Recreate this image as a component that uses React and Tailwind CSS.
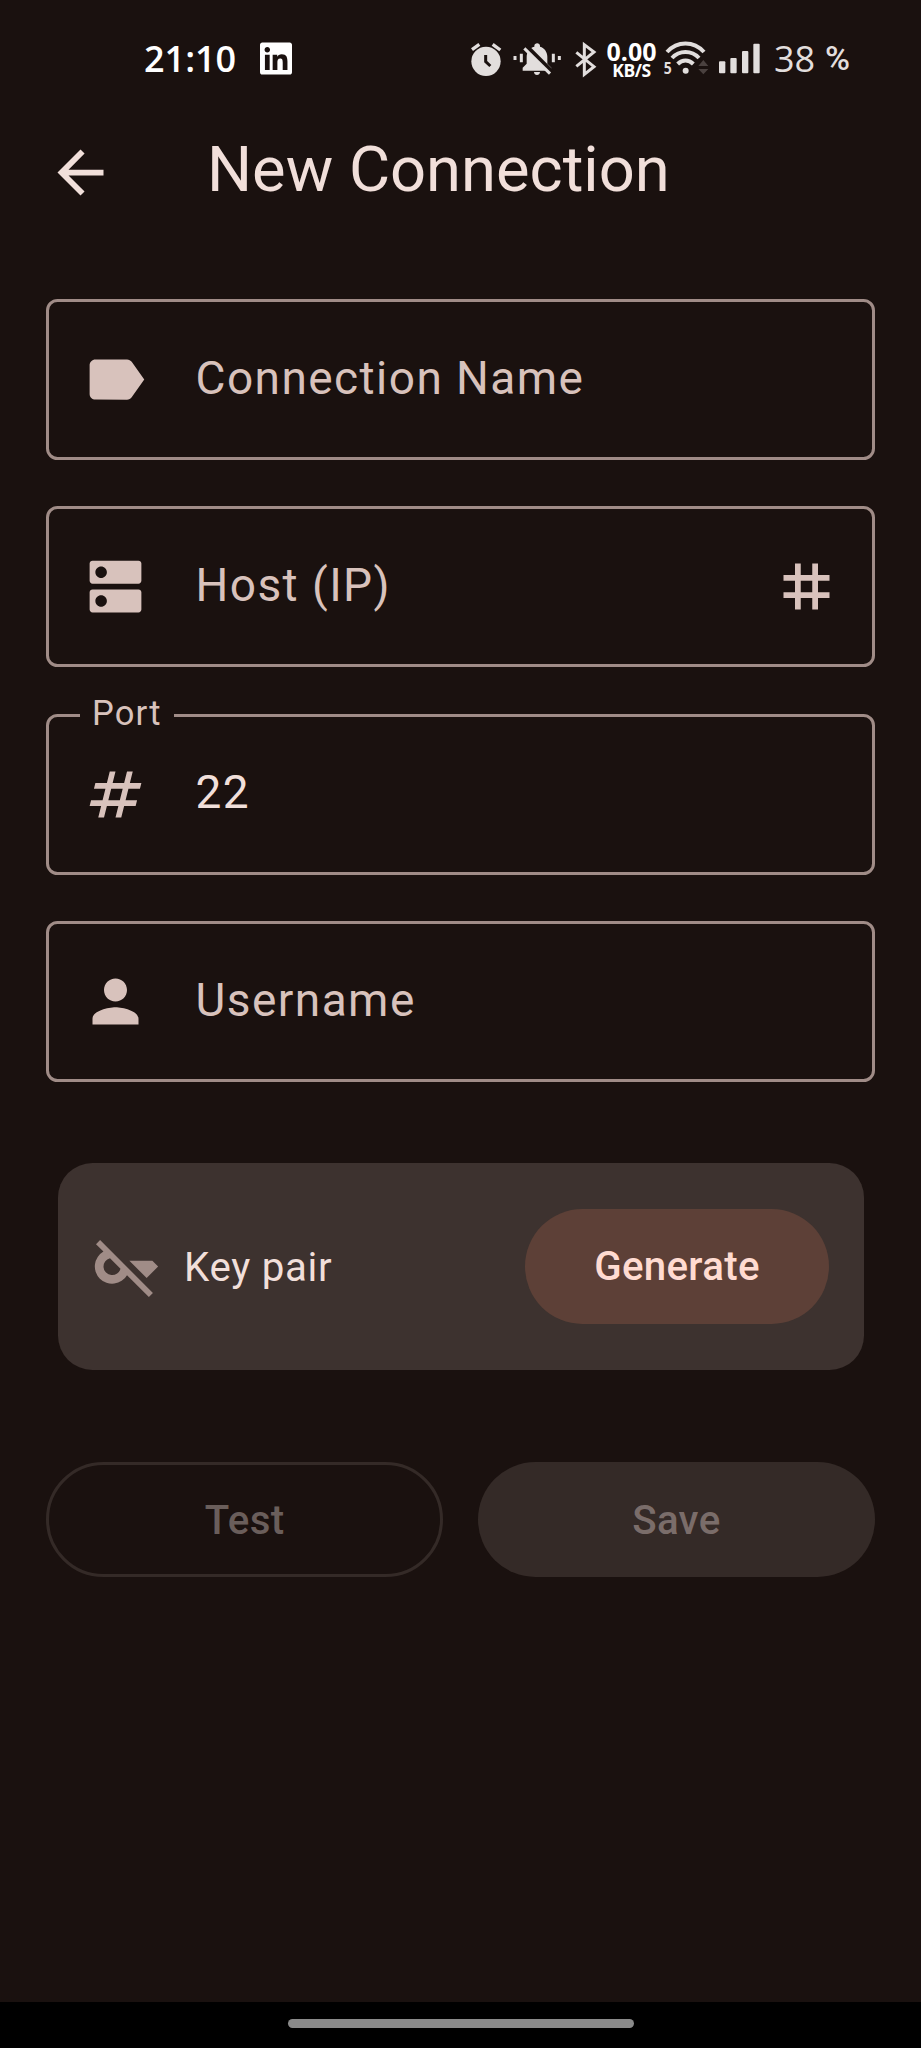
import React from "react";
import { FaLinkedin } from "react-icons/fa";

const icons = {
  back: "M20 11H7.83l5.59-5.59L12 4l-8 8 8 8 1.41-1.41L7.83 13H20v-2z",
  label:
    "M17.63 5.84C17.27 5.33 16.67 5 16 5L5 5.01C3.9 5.01 3 5.9 3 7v10c0 1.1.9 1.99 2 1.99L16 19c.67 0 1.27-.33 1.63-.84L22 12l-4.37-6.16z",
  dns: "M20 13H4c-.55 0-1 .45-1 1v6c0 .55.45 1 1 1h16c.55 0 1-.45 1-1v-6c0-.55-.45-1-1-1zM7 19c-1.1 0-2-.9-2-2s.9-2 2-2 2 .9 2 2-.9 2-2 2zM20 3H4c-.55 0-1 .45-1 1v6c0 .55.45 1 1 1h16c.55 0 1-.45 1-1V4c0-.55-.45-1-1-1zM7 9c-1.1 0-2-.9-2-2s.9-2 2-2 2 .9 2 2-.9 2-2 2z",
  grid: "M20 10V8h-4V4h-2v4h-4V4H8v4H4v2h4v4H4v2h4v4h2v-4h4v4h2v-4h4v-2h-4v-4h4zm-6 4h-4v-4h4v4z",
  tag: "M20.5 10L21 8h-4l1-4h-2l-1 4h-4l1-4h-2L9 8H5l-.5 2h4l-1 4h-4L3 16h4l-1 4h2l1-4h4l-1 4h2l1-4h4l.5-2h-4l1-4h4zm-7 4h-4l1-4h4l-1 4z",
  person:
    "M12 12c2.21 0 4-1.79 4-4s-1.79-4-4-4-4 1.79-4 4 1.79 4 4 4zm0 2c-2.67 0-8 1.34-8 4v2h16v-2c0-2.66-5.33-4-8-4z",
  keyOff:
    "M13 10h8l2 2-4 4-6-6zM2.81 2.81L1.39 4.22l2.59 2.59A6 6 0 1 0 12.18 15l7.6 7.61 1.41-1.41L2.81 2.81zM6.26 9.09l3.65 3.65A3 3 0 1 1 6.26 9.09z",
};

function Icon({ name, className = "" }) {
  return (
    <svg viewBox="0 0 24 24" className={`size-[69px] shrink-0 ${className}`} fill="currentColor" fillRule="evenodd">
      <path d={icons[name]} />
    </svg>
  );
}

function StatusBar() {
  return (
    <div className="h-[115px] pt-10 flex items-start font-['Open_Sans',sans-serif] text-[#e2dedd]">
      <div className="ml-[144px] w-[116px] h-10 text-[36px] leading-[38px] font-semibold text-white whitespace-nowrap">
        21:10
      </div>
      <FaLinkedin className="w-8 h-[37px] text-white" />

      {/* alarm */}
      <svg viewBox="45 30 96 120" className="ml-[178px] w-8 h-10 shrink-0">
        <circle cx="93" cy="94" r="44" fill="currentColor" />
        <path d="M51 59L73 43M113 43l23 17" stroke="currentColor" strokeWidth="10" />
        <path d="M92 75v20l14 13" fill="none" stroke="#1a110f" strokeWidth="9" />
      </svg>

      {/* muted bell */}
      <svg viewBox="174 30 150 120" className="ml-[10px] w-[50px] h-10 shrink-0">
        <path
          d="M206 122v-9l12-12V80c0-15 9-27 23-30v-3c0-10 17-10 17 0v3c14 4 22 16 22 30v21l12 12v9zM240 126h18c0 12-18 12-18 0z"
          fill="currentColor"
        />
        <path d="M214 48l78 78" stroke="#1a110f" strokeWidth="17" />
        <path d="M211 55l77 76" stroke="currentColor" strokeWidth="9" />
        <path d="M183 78v12M202 71v26M298 71v26M316 78v12" stroke="currentColor" strokeWidth="9" />
      </svg>

      {/* bluetooth */}
      <svg viewBox="360 30 72 120" className="ml-3 w-6 h-10 shrink-0">
        <path
          d="M367 67l53 43-29 23V44l29 22-53 43"
          fill="none"
          stroke="currentColor"
          strokeWidth="9"
        />
      </svg>

      <div className="ml-[7px] w-[53px] flex flex-col items-center font-bold text-white">
        <span className="text-[25px] leading-[22px] h-[22px]">0.00</span>
        <span className="text-[17.5px] leading-[17px] tracking-[-0.4px]">KB/S</span>
      </div>

      {/* wifi */}
      <svg viewBox="21 30 147 120" className="ml-[3px] w-[49px] h-10 shrink-0">
        <g fill="none" stroke="currentColor" strokeWidth="12">
          <path d="M39 66c31-34 80-34 111 0" />
          <path d="M54 84c22-24 59-24 81 0" />
          <path d="M71 102c14-14 33-14 47 0" />
        </g>
        <circle cx="95" cy="122" r="9" fill="currentColor" />
        <path d="M133 108l15-18 15 18zM133 117l15 16 15-16z" fill="#4a413f" />
        <text x="29" y="132" fontSize="50" fontWeight="700" textLength="24" lengthAdjust="spacingAndGlyphs" fill="currentColor">
          5
        </text>
      </svg>

      {/* signal */}
      <svg viewBox="189 30 135 120" className="ml-[7px] w-[45px] h-10 shrink-0" fill="currentColor">
        <rect x="195" y="94" width="19" height="36" rx="3" />
        <rect x="229" y="84" width="19" height="46" rx="3" />
        <rect x="264" y="63" width="19" height="67" rx="3" />
        <rect x="298" y="41" width="19" height="89" rx="3" />
      </svg>

      <div className="ml-3 flex font-medium whitespace-nowrap">
        <span className="w-[51px] text-[36px] leading-[38px]">38</span>
        <span className="w-6 font-['Roboto',sans-serif] text-[34px] leading-[36px]">%</span>
      </div>
    </div>
  );
}

function Field({ icon, label, value, trailing }) {
  return (
    <div className="relative h-[161px] px-[31.5px] flex items-center rounded-[11.5px] border-3 border-[#a08c87] text-[#d8c2bc]">
      <Icon name={icon} />
      {value ? (
        <>
          <span className="absolute left-[31px] -top-[27px] px-3 bg-[#1a110f] text-[34.5px] leading-[46px] tracking-[1.15px]">
            {label}
          </span>
          <span className="ml-[46px] pb-1 text-[46px] leading-none tracking-[1.44px] text-[#f1dfda]">{value}</span>
        </>
      ) : (
        <span className="ml-[46px] pb-1 text-[46px] leading-none tracking-[1.44px]">{label}</span>
      )}
      {trailing && <Icon name={trailing} className="ml-auto" />}
    </div>
  );
}

function App() {
  return (
    <div className="w-[921px] h-[2048px] flex flex-col overflow-hidden bg-[#1a110f] text-[#f1dfda] font-['Roboto',sans-serif]">
      <StatusBar />

      <header className="h-[115px] px-[46px] pb-px flex items-center">
        <Icon name="back" />
        <h1 className="ml-[92px] pb-1 text-[63.25px] leading-none">New Connection</h1>
      </header>

      <main className="flex-1 pt-[69px] px-[46px]">
        <div className="flex flex-col gap-[46.4px]">
          <Field icon="label" label="Connection Name" />
          <Field icon="dns" label="Host (IP)" trailing="grid" />
          <Field icon="tag" label="Port" value="22" />
          <Field icon="person" label="Username" />
        </div>

        <div className="mt-[81px] mx-[11.5px] h-[207px] px-[34.5px] flex items-center rounded-[34.5px] bg-[#3d322f]">
          <Icon name="keyOff" className="text-[#a08c87]" />
          <span className="ml-[23px] pt-0.5 text-[40.25px] leading-none tracking-[0.7px]">Key pair</span>
          <button className="ml-auto w-[304px] h-[115px] pt-0.5 rounded-full bg-[#5d4037] text-[#ffdbd1] text-[40.25px] font-medium tracking-[0.3px]">
            Generate
          </button>
        </div>

        <div className="mt-[92px] grid grid-cols-2 gap-[34.5px] text-[40.25px] font-medium tracking-[0.3px] text-[#f1dfda]/38">
          <button className="h-[115px] pt-[3px] rounded-full border-3 border-[#342a27]">Test</button>
          <button className="h-[115px] pt-[3px] rounded-full bg-[#342a27]">Save</button>
        </div>
      </main>

      <div className="h-[46px] pb-1 flex items-center justify-center bg-black">
        <div className="w-[346px] h-[9px] rounded-full bg-[#8a8a8a]" />
      </div>
    </div>
  );
}

export default App;
